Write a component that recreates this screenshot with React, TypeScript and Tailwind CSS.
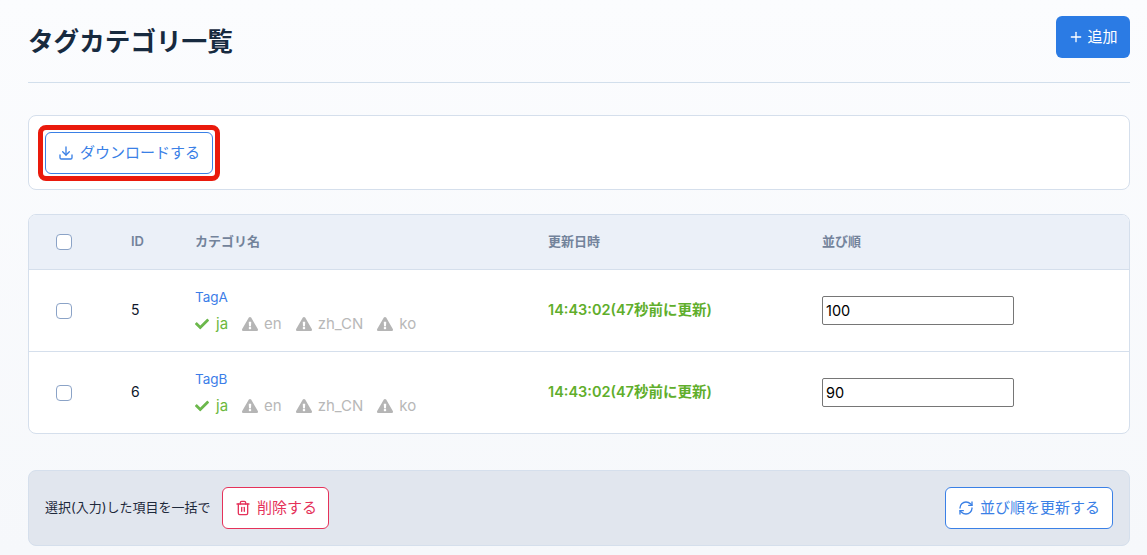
import { Download, Trash2, RefreshCw, Plus } from "lucide-react";
import { FaCheck, FaExclamationTriangle } from "react-icons/fa";

const font = "font-['Inter','Noto_Sans_CJK_JP',sans-serif]";

function Check() {
  return <input type="checkbox" className="appearance-none block w-4 h-4 rounded-[4px] border border-[#8ba3c7] bg-white" />;
}

function Warn({ label }: { label: string }) {
  return (
    <span className="flex items-center gap-[6px] text-[#b8b8b8]">
      <FaExclamationTriangle className="w-4 h-4 text-[#b5b5b5]" />
      {label}
    </span>
  );
}

function Row({ id, name, order }: { id: string; name: string; order: string }) {
  return (
    <div className="flex items-center h-[82px] border-t border-[#d5dfec]">
      <div className="w-[102px] pl-[27px]"><Check /></div>
      <div className="w-[64px] text-sm text-[#0f172a] -mt-[2px]">{id}</div>
      <div className="w-[353px]">
        <div className="text-[13.5px] leading-5 text-[#3b7de8]">{name}</div>
        <div className="flex items-center mt-[7px] text-[15px] leading-5 gap-[14px]">
          <span className="flex items-center gap-[7px] text-[#6cb83c]">
            <FaCheck className="w-[14px] h-[14px] text-[#6cb84c]" />
            ja
          </span>
          <Warn label="en" />
          <Warn label="zh_CN" />
          <Warn label="ko" />
        </div>
      </div>
      <div className="w-[274px] text-[14.5px] font-semibold text-[#5fae2b] -mt-[2px]">14:43:02(47秒前に更新)</div>
      <input
        readOnly
        value={order}
        className="w-[192px] h-[29px] pl-[3px] pb-[1px] text-[14.5px] text-black bg-white border border-[#767676] rounded-[2px] outline-none"
      />
    </div>
  );
}

export default function App() {
  return (
    <div className={`${font} h-[555px] overflow-hidden bg-linear-to-b from-[#fbfcfe] to-[#f6f8fb] pl-7 pr-[17px] pt-4`}>
      <div className="flex items-start justify-between h-[67px] border-b border-[#d2dfec]">
        <h1 className="mt-2 text-[25.6px] leading-9 font-bold text-[#172a3f]">タグカテゴリ一覧</h1>
        <button className="flex items-center justify-center gap-[3px] w-[74px] h-[42px] rounded-md bg-[#2b7be4] text-[15px] text-white">
          <Plus className="w-4 h-4" strokeWidth={2} />
          追加
        </button>
      </div>

      <div className="mt-8 h-[75px] rounded-lg border border-[#d5dfec] bg-white p-4">
        <div className="w-fit -m-[7px] rounded-[8px] border-[5px] border-[#ea1a0c] p-[2px]">
          <button className="flex items-center gap-[6px] h-[42px] w-[168px] justify-center rounded-md border border-[#3a80e6] bg-white text-[15px] text-[#3a80e6]">
            <Download className="w-4 h-4" strokeWidth={2} />
            ダウンロードする
          </button>
        </div>
      </div>

      <div className="mt-6 rounded-lg border border-[#d5dfec] bg-white overflow-hidden">
        <div className="flex items-center h-[54px] bg-[#ebf0f8] text-[13px] font-semibold text-[#73839b]">
          <div className="w-[102px] pl-[27px]"><Check /></div>
          <div className="w-[64px]">ID</div>
          <div className="w-[353px]">カテゴリ名</div>
          <div className="w-[274px]">更新日時</div>
          <div>並び順</div>
        </div>
        <Row id="5" name="TagA" order="100" />
        <Row id="6" name="TagB" order="90" />
      </div>

      <div className="mt-9 flex items-center justify-between h-[76px] rounded-lg border border-[#d5dfec] bg-[#e1e6ee] px-4">
        <div className="flex items-center gap-3">
          <span className="text-[13px] text-[#1e293b]">選択(入力)した項目を一括で</span>
          <button className="flex items-center justify-center gap-[6px] w-[107px] h-[42px] rounded-md border border-[#e5325a] bg-white text-[15px] text-[#e5325a]">
            <Trash2 className="w-4 h-4" strokeWidth={2} />
            削除する
          </button>
        </div>
        <button className="flex items-center justify-center gap-[6px] w-[168px] h-[42px] rounded-md border border-[#3a80e6] bg-white text-[15px] text-[#3a80e6]">
          <RefreshCw className="w-4 h-4" strokeWidth={2} />
          並び順を更新する
        </button>
      </div>
    </div>
  );
}
